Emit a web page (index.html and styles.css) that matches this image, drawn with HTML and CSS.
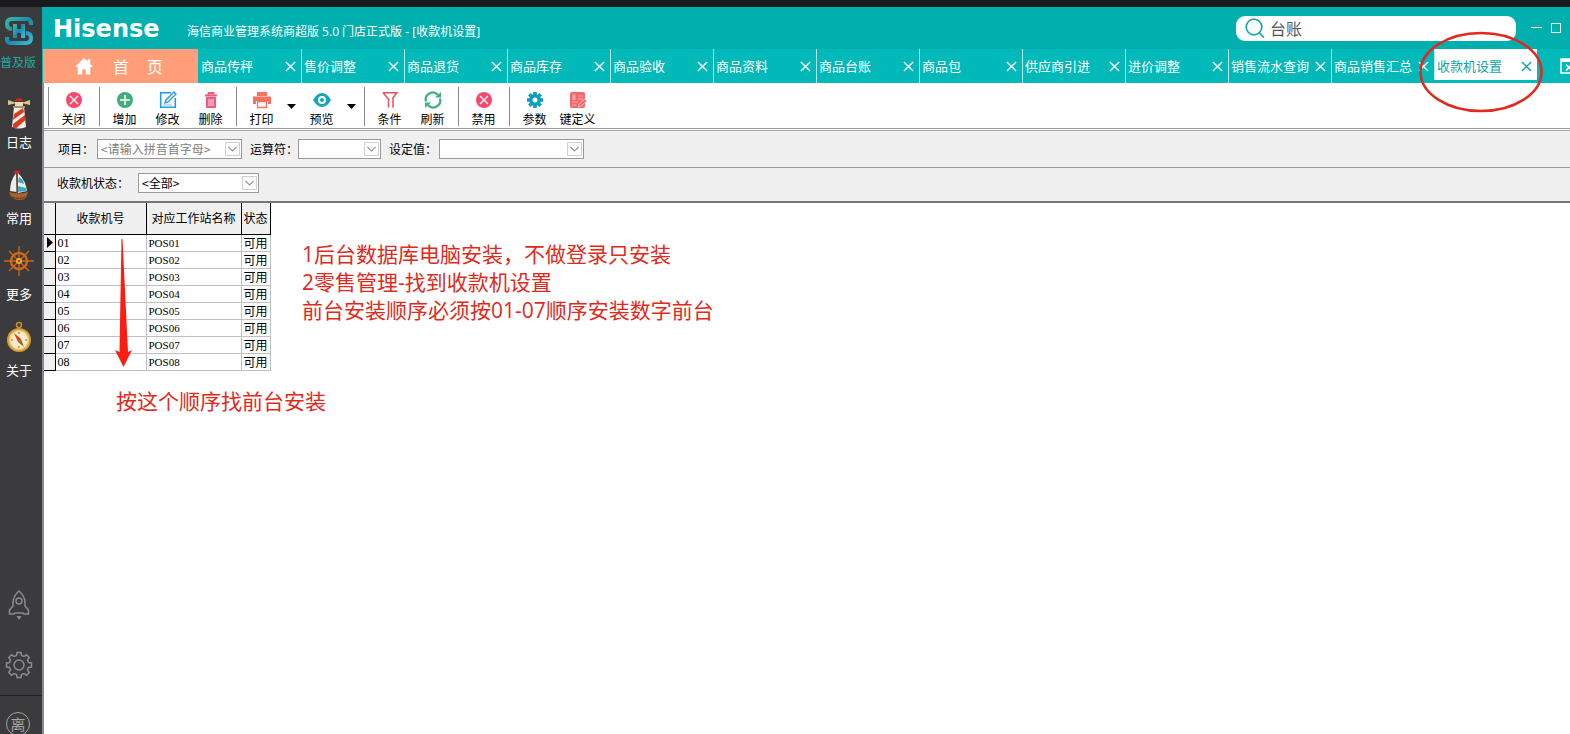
FILE: index.html
```html
<!DOCTYPE html>
<html lang="zh-CN">
<head>
<meta charset="utf-8">
<title>海信商业管理系统商超版</title>
<link rel="stylesheet" href="styles.css">
</head>
<body>
<svg class="defs" aria-hidden="true">
  <symbol id="x" viewBox="0 0 12 12"><path d="M1 1l10 10M11 1L1 11" fill="none" stroke="currentColor" stroke-width="1.5"/></symbol>
  <symbol id="chev" viewBox="0 0 15 14"><path d="M.5.5h14v13H.5z" fill="#fcfcfc" stroke="#cfcfcf"/><path d="M3.500 5l4 4 4-4" fill="none" stroke="#999" stroke-width="1.200"/></symbol>
  <symbol id="ban" viewBox="0 0 18 18"><circle cx="9" cy="9" r="8" fill="#f8486e"/><path d="M5 5l8 8M13 5l-8 8" stroke="#fff" stroke-width="1.300"/></symbol>
  <symbol id="down" viewBox="0 0 9 5"><path d="M0 0h9L4.500 5z" fill="#000"/></symbol>
</svg>
<div class="topbar"></div>
<div class="app">
  <nav class="side">
    <div class="brand">
      <svg width="30" height="30" viewBox="0 0 30 30"><defs><linearGradient id="g" x1="0" y1="0" x2="1" y2="1"><stop offset="0" stop-color="#34b6a6"/><stop offset=".5" stop-color="#1c87ad"/><stop offset="1" stop-color="#36bcd4"/></linearGradient></defs><path d="M27 9V6q-1-3-4-3H8Q3 3 3 8t5 5M3 21v3q1 3 4 3h15q5 0 5-5t-5-5" fill="none" stroke="url(#g)" stroke-width="4"/><path d="M11 8v14M19 8v14M11 15h8" fill="none" stroke="url(#g)" stroke-width="4"/></svg>
      <span>普及版</span>
    </div>
    <button class="nav first"><svg width="24" height="32" viewBox="0 0 24 32"><path d="M7 10h10l2 20q-7 3-14 0z" fill="#f5eee6"/><path d="M7 17l9-6 1 4-11 8zM6 27l12-9 .5 5-9 8H6z" fill="#d83a22"/><path d="M1 3l9 3-9 2zM23 3l-9 3 9 2z" fill="#d9c67c"/><path d="M8 5h8v5H8z" fill="#e9dcba"/><path d="M7 4q5-6 10 0z" fill="#d5261c"/><path d="M6 9h12v2H6z" fill="#a98e70"/></svg><span>日志</span></button>
    <button class="nav"><svg width="24" height="32" viewBox="0 0 24 32"><path d="M9 4Q3 12 3 22l7 1z" fill="#ececec"/><path d="M11 4q8 8 9 18l-9 2z" fill="#dff3f6"/><path d="M12 8l4 3 1 4-6-2zM11 17l8 2 .5 3-8.500 1z" fill="#3fa9c3"/><path d="M10 2v23" stroke="#8c4c22" stroke-width="1.500"/><path d="M6 3q3-3 8 0l-4 2z" fill="#d92222"/><path d="M2 23q9 3 19 0-1 7-7 8-9 1-12-8z" fill="#a9622e"/><path d="M5 28q8 3 13 0" stroke="#6f3514" fill="none"/></svg><span>常用</span></button>
    <button class="nav"><svg width="32" height="32" viewBox="0 0 32 32"><g fill="none" stroke="#cf6718"><circle cx="16" cy="16" r="8" stroke-width="2.500"/><path d="M16 1v30M1 16h30M6 6l20 20M26 6L6 26" stroke-width="1.300"/></g><circle cx="16" cy="16" r="3" fill="#f2a53e"/><circle cx="16" cy="16" r="1" fill="#753108"/></svg><span>更多</span></button>
    <button class="nav"><svg width="26" height="32" viewBox="0 0 26 32"><circle cx="13" cy="4" r="2.500" fill="none" stroke="#c28d31" stroke-width="1.500"/><circle cx="13" cy="19" r="12" fill="#d09a3a"/><circle cx="13" cy="19" r="9.500" fill="#f8edcb" stroke="#efc766" stroke-width="1.500"/><path d="M8 12l7 6-3 3z" fill="#d63a20"/><path d="M18 26l-6-5 3-3z" fill="#9a642b"/><path d="M13 11v2M13 25v2M5 19h2M19 19h2" stroke="#8a642c"/></svg><span>关于</span></button>
    <div class="tools">
      <button class="tool" aria-label="启动"><svg width="22" height="32" viewBox="0 0 22 32"><g fill="none" stroke="#8c8c8c" stroke-width="1.500"><path d="M11 2Q5 7 5 14v3l-3.500 4v4H6l1-1h8l1 1h4.500v-4L17 17v-3q0-7-6-12z"/><circle cx="11" cy="12" r="3"/></g><path d="M8.500 27h5L11 31z" fill="#8c8c8c"/></svg></button>
      <button class="tool" aria-label="设置"><svg width="28" height="28" viewBox="0 0 28 28"><path d="M11.500 4.500l.5-3h4l.5 3 2.500 1 2.500-1.700 2.700 2.700L22.500 9l1 2.500 3 .5v4l-3 .5-1 2.500 1.700 2.500-2.700 2.700-2.500-1.700-2.500 1-.5 3h-4l-.5-3-2.500-1-2.500 1.700-2.700-2.700L5.500 19l-1-2.500-3-.5v-4l3-.5 1-2.500-1.700-2.500 2.700-2.700L9 5.500z" fill="none" stroke="#8c8c8c" stroke-width="1.500"/><circle cx="14" cy="14" r="5" fill="none" stroke="#8c8c8c" stroke-width="1.500"/></svg></button>
      <button class="leave"><span>离</span></button>
    </div>
  </nav>
  <main class="main">
    <header class="head">
      <div class="logo">Hisense</div>
      <h1 class="title">海信商业管理系统商超版 5.0 门店正式版 - [收款机设置]</h1>
      <label class="search"><svg width="20" height="20" viewBox="0 0 20 20"><g fill="none" stroke="#17a7a4" stroke-width="1.700"><circle cx="9" cy="9" r="7.800"/><path d="M14 14.500l5 5"/></g></svg><input type="text" value="台账" aria-label="搜索"></label>
      <button class="win" aria-label="最小化"><svg width="11" height="11"><path d="M0 4.500h11" stroke="#fff"/></svg></button>
      <button class="win" aria-label="最大化"><svg width="11" height="11"><path d="M.5.5h9v9h-9z" fill="none" stroke="#fff"/></svg></button>
    </header>
    <div class="tabs">
      <button class="home"><svg width="18" height="18" viewBox="0 0 20 20"><path d="M10 1L0 11h3v8.500h5V14h4v5.500h5V11h3l-3-3V2.500h-3V5z" fill="#fff"/></svg><span>首</span><span>页</span></button>
      <div class="tab"><span>商品传秤</span><button aria-label="关闭"><svg><use href="#x"/></svg></button></div>
      <div class="tab"><span>售价调整</span><button aria-label="关闭"><svg><use href="#x"/></svg></button></div>
      <div class="tab"><span>商品退货</span><button aria-label="关闭"><svg><use href="#x"/></svg></button></div>
      <div class="tab"><span>商品库存</span><button aria-label="关闭"><svg><use href="#x"/></svg></button></div>
      <div class="tab"><span>商品验收</span><button aria-label="关闭"><svg><use href="#x"/></svg></button></div>
      <div class="tab"><span>商品资料</span><button aria-label="关闭"><svg><use href="#x"/></svg></button></div>
      <div class="tab"><span>商品台账</span><button aria-label="关闭"><svg><use href="#x"/></svg></button></div>
      <div class="tab"><span>商品包</span><button aria-label="关闭"><svg><use href="#x"/></svg></button></div>
      <div class="tab"><span>供应商引进</span><button aria-label="关闭"><svg><use href="#x"/></svg></button></div>
      <div class="tab"><span>进价调整</span><button aria-label="关闭"><svg><use href="#x"/></svg></button></div>
      <div class="tab"><span>销售流水查询</span><button aria-label="关闭"><svg><use href="#x"/></svg></button></div>
      <div class="tab"><span>商品销售汇总</span><button aria-label="关闭"><svg><use href="#x"/></svg></button></div>
      <div class="tab active"><span>收款机设置</span><button aria-label="关闭"><svg><use href="#x"/></svg></button>
        <svg class="ring" viewBox="0 0 126 82"><ellipse cx="63" cy="41" rx="60.500" ry="39" fill="none" stroke="#e3281e" stroke-width="2.500"/></svg></div>
      <button class="closeall" aria-label="关闭全部"><svg width="20" height="16" viewBox="0 0 20 16"><path d="M1 1h18v14H1z" fill="none" stroke="#fff" stroke-width="1.500"/><path d="M1 1h18v3H1z" fill="#fff"/><path d="M6 6.500l6 6M12 6.500l-6 6" fill="none" stroke="#fff" stroke-width="1.600"/></svg></button>
    </div>
    <div class="body">
      <div class="toolbar">
        <div class="group"><button class="act"><svg><use href="#ban"/></svg>关闭</button></div>
        <div class="group">
          <button class="act"><svg viewBox="0 0 18 18"><circle cx="9" cy="9" r="8" fill="#3fae7c"/><path d="M9 4v10M4 9h10" stroke="#fff" stroke-width="1.500"/></svg>增加</button>
          <button class="act"><svg viewBox="0 0 18 18"><path d="M12 1.700H1.700v14.600h14.600V7" fill="none" stroke="#279be0" stroke-width="1.600"/><path d="M6 12l1-3 8-8 2 2-8 8z" fill="#fff" stroke="#279be0" stroke-width="1.400"/><path d="M4 14h9" stroke="#7cc5ee"/></svg>修改</button>
          <button class="act"><svg viewBox="0 0 18 18"><path d="M3 4.500h12M6.500 4V2h5v2" fill="none" stroke="#ef5b7c" stroke-width="1.800"/><path d="M4 6h10v11H4z" fill="#ef5b7c"/><path d="M7 8v7M9 8v7M11 8v7" stroke="#fff" stroke-width=".8"/></svg>删除</button>
        </div>
        <div class="group">
          <button class="act"><svg viewBox="0 0 18 18"><path d="M4 1h10v4H4zM0 5.500h18V13h-3v-3H3v3H0z" fill="#f8705f"/><path d="M4.500 10.500h9v6h-9z" fill="#fff" stroke="#f8705f" stroke-width="1.300"/></svg>打印</button>
          <button class="more" aria-label="打印选项"><svg><use href="#down"/></svg></button>
          <button class="act"><svg viewBox="0 0 18 18"><path d="M0 9q4-7 9-7t9 7q-4 7-9 7T0 9z" fill="#10a7b7"/><circle cx="9" cy="9" r="3" fill="none" stroke="#fff" stroke-width="2"/></svg>预览</button>
          <button class="more" aria-label="预览选项"><svg><use href="#down"/></svg></button>
        </div>
        <div class="group">
          <button class="act"><svg viewBox="0 0 18 18"><path d="M2 1.700h14l-4 5v10M2 1.700L7.500 8v8.500" fill="none" stroke="#ec4f62" stroke-width="1.500"/></svg>条件</button>
          <button class="act"><svg viewBox="0 0 18 18"><g fill="none" stroke="#42ae7a" stroke-width="2.200"><path d="M2 10.500A7 7 0 0 1 14 4M16 7.500A7 7 0 0 1 4 14"/></g><path d="M11 6.500h6V1zM7 11.500H1V17z" fill="#42ae7a"/></svg>刷新</button>
        </div>
        <div class="group"><button class="act"><svg><use href="#ban"/></svg>禁用</button></div>
        <div class="group">
          <button class="act"><svg viewBox="0 0 18 18"><g stroke="#109fbb" stroke-width="3.600"><path d="M9 1v16M1 9h16M3.300 3.300l11.400 11.400M14.700 3.300L3.300 14.700"/></g><circle cx="9" cy="9" r="6" fill="#109fbb"/><circle cx="9" cy="9" r="2.500" fill="#fff"/></svg>参数</button>
          <button class="act"><svg viewBox="0 0 18 18"><rect x="1" y="1" width="15" height="16" rx="2" fill="#f2686b"/><path d="M3 3l2 2 2-2M5 5v4M3 6h4M3 8h4M9 5h5M9 8h5M3 11h6M3 14h4" fill="none" stroke="#ffd0d0" stroke-width=".7"/><path d="M9 16l1-3 6-5 2 2-6 5z" fill="#f2686b" stroke="#ffe1e1" stroke-width=".7"/></svg>键定义</button>
        </div>
      </div>
      <form class="filters">
        <label for="item">项目：</label><span class="pick wide hint"><select id="item"><option>&lt;请输入拼音首字母&gt;</option></select><svg><use href="#chev"/></svg></span>
        <label for="op">运算符：</label><span class="pick small"><select id="op"><option></option></select><svg><use href="#chev"/></svg></span>
        <label for="val">设定值：</label><span class="pick wide value"><select id="val"><option></option></select><svg><use href="#chev"/></svg></span>
      </form>
      <form class="filters state">
        <label for="state">收款机状态：</label><span class="pick mid"><select id="state"><option>&lt;全部&gt;</option></select><svg><use href="#chev"/></svg></span>
      </form>
      <section class="content">
        <table class="grid">
          <thead><tr><th class="c0"></th><th class="c1">收款机号</th><th class="c2">对应工作站名称</th><th class="c3">状态</th></tr></thead>
          <tbody>
            <tr><th><svg width="6" height="11" viewBox="0 0 6 11"><path d="M0 0l6 5.500L0 11z"/></svg></th><td>01</td><td class="pos">POS01</td><td class="st">可用</td></tr>
            <tr><th></th><td>02</td><td class="pos">POS02</td><td class="st">可用</td></tr>
            <tr><th></th><td>03</td><td class="pos">POS03</td><td class="st">可用</td></tr>
            <tr><th></th><td>04</td><td class="pos">POS04</td><td class="st">可用</td></tr>
            <tr><th></th><td>05</td><td class="pos">POS05</td><td class="st">可用</td></tr>
            <tr><th></th><td>06</td><td class="pos">POS06</td><td class="st">可用</td></tr>
            <tr><th></th><td>07</td><td class="pos">POS07</td><td class="st">可用</td></tr>
            <tr><th></th><td>08</td><td class="pos">POS08</td><td class="st">可用</td></tr>
          </tbody>
        </table>
        <svg class="arrow" viewBox="0 0 18 130"><path d="M7.500 1h1L14 114l4-2-8.500 17L1 112l4.500 2z" fill="#fb1c12"/></svg>
        <p class="note order">按这个顺序找前台安装</p>
        <p class="note steps">1后台数据库电脑安装，不做登录只安装<br>2零售管理-找到收款机设置<br>前台安装顺序必须按01-07顺序安装数字前台</p>
      </section>
    </div>
  </main>
</div>
</body>
</html>
```
FILE: styles.css
```css
* { box-sizing: border-box; }
body {
  margin: 0;
  height: 100vh;
  overflow: hidden;
  display: flex;
  flex-direction: column;
  background: #fff;
  color: #000;
  font: 12px/16px "Noto Sans CJK SC", sans-serif;
}
button { padding: 0; border: 0; background: none; color: inherit; font: inherit; }
svg { display: block; }
.defs { position: absolute; width: 0; height: 0; }
.topbar { flex: none; height: 7px; background: #1a1a1c; }
.app { flex: 1; min-height: 0; display: flex; }

.side {
  flex: none;
  width: 42px;
  display: flex;
  flex-direction: column;
  padding-right: 4px;
  background: #3b3b3d;
  color: #fff;
  overflow: hidden;
}
.brand {
  display: flex;
  flex-direction: column;
  align-items: center;
  gap: 8px;
  padding: 9px 0 20px;
  color: #1eaaa0;
}
.brand span { margin-left: -2px; white-space: nowrap; }
.nav {
  display: flex;
  flex-direction: column;
  align-items: center;
  gap: 9px;
  height: 76px;
  padding-top: 3px;
  font-size: 13px;
}
.nav.first { gap: 5px; padding-top: 7px; }
.tools { display: flex; flex-direction: column; margin-top: auto; }
.tool { display: flex; align-items: center; justify-content: center; height: 60px; }
.leave {
  display: flex;
  justify-content: center;
  height: 39px;
  margin-right: -4px;
  padding: 16px 6px 0 0;
  border-top: 1px solid #232325;
  color: #a5a5a5;
}
.leave span {
  flex: none;
  width: 24px;
  height: 24px;
  border: 1px solid #a5a5a5;
  border-radius: 50%;
  font-size: 15px;
  line-height: 22px;
}

.main { flex: 1; min-width: 0; display: flex; flex-direction: column; }
.head {
  flex: none;
  display: flex;
  align-items: center;
  height: 42px;
  padding: 0 8px 0 11px;
  background: #00afae;
  color: #fff;
}
.logo { width: 134px; margin-top: 2px; font: bold 24px/28px "DejaVu Sans", sans-serif; }
.title {
  margin: 7px auto 0 0;
  font: 400 12px/16px "Open Sans", "Noto Sans CJK SC", sans-serif;
}
.search {
  display: flex;
  align-items: center;
  gap: 5px;
  width: 280px;
  height: 25px;
  margin-right: 15px;
  padding-left: 9px;
  border-radius: 9px;
  background: #fff;
}
.search input {
  flex: 1;
  min-width: 0;
  padding: 0;
  border: 0;
  outline: 0;
  background: none;
  color: #555;
  font: 16px/24px "Noto Sans CJK SC", sans-serif;
}
.win + .win { margin-left: 9px; }

.tabs {
  flex: none;
  display: flex;
  height: 34px;
  padding-left: 1px;
  background: #00b9b8;
  color: #fff;
}
.home {
  flex: none;
  display: flex;
  align-items: center;
  gap: 18px;
  width: 155px;
  padding-left: 32px;
  background: #ff9e78;
  font-size: 16px;
}
.home svg { margin-right: 2px; }
.tab {
  flex: none;
  position: relative;
  display: flex;
  align-items: center;
  justify-content: space-between;
  width: 103px;
  padding: 0 5px 0 2px;
  border-left: 1px solid #b5e9e8;
  font-size: 13px;
  white-space: nowrap;
}
.home + .tab { border-left-color: #00b9b8; }
.tab button svg { width: 11px; height: 11px; }
.tab.active { height: 31px; padding-top: 3px; background: #fff; color: #12a5a4; }
.ring { position: absolute; z-index: 2; left: -17px; top: -18px; width: 126px; height: 82px; }
.closeall { flex: none; margin-left: 23px; }

.body { flex: 1; min-height: 0; display: flex; flex-direction: column; border-left: 2px solid #8a8a8a; }
.toolbar {
  flex: none;
  display: flex;
  height: 46px;
  padding: 4px 0 2px 4px;
  border-bottom: 1px solid #999;
  background: #fff;
}
.group { display: flex; padding: 0 4px 0 3px; border-left: 1px solid #8c8c8c; }
.act {
  display: flex;
  flex-direction: column;
  align-items: center;
  gap: 2px;
  width: 43px;
  padding-top: 4px;
  line-height: 16px;
  white-space: nowrap;
}
.act svg { flex: none; width: 18px; height: 18px; }
.more { display: flex; justify-content: center; width: 17px; padding-top: 17px; }
.more svg { width: 9px; height: 5px; }

.filters {
  flex: none;
  display: flex;
  align-items: center;
  height: 37px;
  margin-top: 1px;
  padding-left: 14px;
  border-top: 1px solid #a5a5a5;
  background: #f0f0f0;
}
.filters label { white-space: nowrap; }
.filters .pick + label { margin-left: 8px; }
.state { height: 36px; padding: 0 0 4px 13px; border-top-color: #999; border-bottom: 2px solid #777; margin-top: 0; }
.pick { position: relative; display: block; height: 20px; }
.pick select {
  appearance: none;
  width: 100%;
  height: 100%;
  padding: 0 18px 0 3px;
  border: 1px solid #999;
  border-radius: 0;
  background: #fff;
  color: #000;
  font: 12px/16px "Noto Sans CJK SC", sans-serif;
}
.pick svg { position: absolute; right: 2px; top: 3px; width: 15px; height: 14px; pointer-events: none; }
.pick.hint select { color: #808080; }
.wide { width: 145px; margin-left: 3px; }
.wide.value { margin-left: 2px; }
.small { width: 83px; }
.mid { width: 121px; margin-left: 9px; }

.content { flex: 1; min-height: 0; position: relative; background: #fff; }
.grid { border-collapse: collapse; table-layout: fixed; width: 226px; line-height: 16px; }
.grid th, .grid td { padding: 0; border: 1px solid #c0c0c0; font-weight: 400; white-space: nowrap; overflow: hidden; }
.grid th { border-color: #000; background: #f0f0f0; }
.grid thead th { height: 31px; border-top: 0; }
.grid tr th:first-child { border-left: 0; }
.grid tbody tr { height: 17px; }
.grid tbody th svg { margin-left: 3px; }
.grid td { height: 17px; padding-left: 2px; font-family: "Liberation Serif", serif; }
.grid td.pos { font-size: 11px; }
.grid td.st { font-family: "Noto Sans CJK SC", sans-serif; }
.c0 { width: 11px; }
.c1 { width: 91px; }
.c2 { width: 95px; }
.c3 { width: 29px; }
.arrow { position: absolute; left: 70px; top: 35px; width: 18px; height: 130px; }
.note {
  position: absolute;
  margin: 0;
  color: #e02a20;
  font: 400 21px/28px "Open Sans", "Noto Sans CJK SC", sans-serif;
  white-space: nowrap;
}
.order { left: 72px; top: 184px; }
.steps { left: 258px; top: 37px; }
```
